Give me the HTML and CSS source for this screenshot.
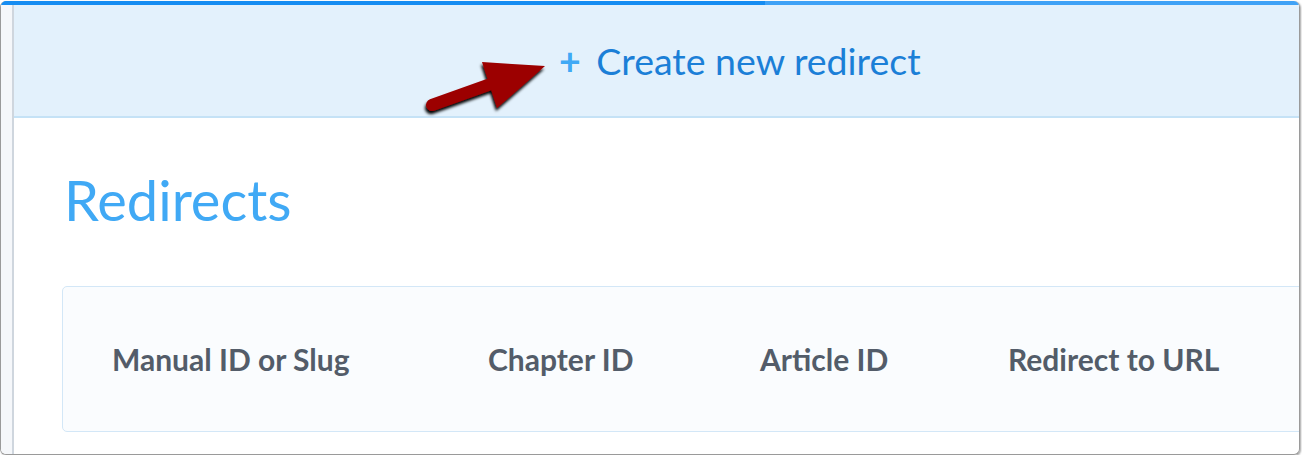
FILE: index.html
```html
<!DOCTYPE html>
<html lang="en">
<head>
    <meta charset="UTF-8">
    <meta name="viewport" content="width=device-width, initial-scale=1.0">
    <title>Redirects</title>
    <link rel="stylesheet" href="styles.css">
</head>
<body>
    <div class="window">
        <div class="progress"><div class="progress-fill"></div></div>
        <div class="frame">
            <div class="sidebar"></div>
            <div class="main">
                <header class="create-bar">
                    <a href="#" class="create-link"><span class="plus">+</span> Create new redirect</a>
                    <svg class="arrow" width="140" height="70" viewBox="0 0 140 70">
                        <defs>
                            <filter id="shadow" x="-20%" y="-20%" width="140%" height="150%">
                                <feGaussianBlur in="SourceAlpha" stdDeviation="1.5"/>
                                <feOffset dx="-1" dy="2.5" result="blur"/>
                                <feMerge>
                                    <feMergeNode in="blur"/>
                                    <feMergeNode in="SourceGraphic"/>
                                </feMerge>
                            </filter>
                        </defs>
                        <g filter="url(#shadow)">
                            <line x1="18" y1="56" x2="74" y2="36" stroke="#9c0000" stroke-width="12" stroke-linecap="round"/>
                            <polygon points="68,13 131,17 83,59" fill="#9c0000"/>
                        </g>
                    </svg>
                </header>

                <h1 class="title">Redirects</h1>

                <div class="table-head">
                    <div>Manual ID or Slug</div>
                    <div>Chapter ID</div>
                    <div>Article ID</div>
                    <div>Redirect to URL</div>
                </div>
            </div>
        </div>
    </div>
</body>
</html>
```

FILE: styles.css
```css
body {
    margin: 0;
    padding: 0;
    background-color: #fff;
    font-family: Lato, "Open Sans", sans-serif;
}
.window {
    width: 1298px;
    height: 453px;
    border: 1px solid #9a9a9a;
    border-top: none;
    border-radius: 6px;
    box-shadow: 1px 1px 2px rgba(0, 0, 0, 0.35);
    overflow: hidden;
    display: flex;
    flex-direction: column;
    margin-top: 1px;
}
.progress {
    height: 4px;
    background-color: #3fa2f6;
    flex-shrink: 0;
}
.progress-fill {
    width: 764px;
    height: 100%;
    background-color: #168df2;
}
.frame {
    flex: 1;
    display: flex;
    min-height: 0;
}
.sidebar {
    width: 11px;
    background-color: #f5f7fa;
    border-right: 2px solid #cfd6de;
    flex-shrink: 0;
}
.main {
    flex: 1;
    min-width: 0;
    overflow: hidden;
}
.create-bar {
    position: relative;
    height: 111px;
    background-color: #e3f1fc;
    border-bottom: 2px solid #c5e2f6;
    display: flex;
    align-items: center;
    padding-left: 545px;
    box-sizing: content-box;
}
.create-link {
    color: #1b7fd7;
    text-decoration: none;
    font-size: 37.5px;
}
.plus {
    color: #3fa9f5;
    font-weight: bold;
    margin-right: 6px;
}
.arrow {
    position: absolute;
    left: 400px;
    top: 44px;
}
.title {
    margin: 52px 0 0 50px;
    font-size: 56px;
    font-weight: normal;
    color: #40a9f5;
    line-height: 60px;
}
.table-head {
    margin: 56px 0 0 48px;
    width: 1400px;
    height: 144px;
    border: 1px solid #d3e7f7;
    border-radius: 5px;
    background-color: #fafcfe;
    display: grid;
    grid-template-columns: 376px 272px 248px 1fr;
    align-items: center;
    padding-left: 49px;
    font-size: 30px;
    font-weight: bold;
    color: #535c69;
}
```
